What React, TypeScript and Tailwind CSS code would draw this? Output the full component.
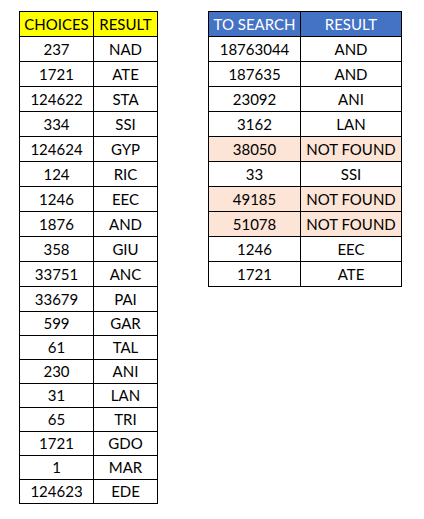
const choices: [string, string][] = [
  ['237', 'NAD'],
  ['1721', 'ATE'],
  ['124622', 'STA'],
  ['334', 'SSI'],
  ['124624', 'GYP'],
  ['124', 'RIC'],
  ['1246', 'EEC'],
  ['1876', 'AND'],
  ['358', 'GIU'],
  ['33751', 'ANC'],
  ['33679', 'PAI'],
  ['599', 'GAR'],
  ['61', 'TAL'],
  ['230', 'ANI'],
  ['31', 'LAN'],
  ['65', 'TRI'],
  ['1721', 'GDO'],
  ['1', 'MAR'],
  ['124623', 'EDE'],
];

const searches: [string, string][] = [
  ['18763044', 'AND'],
  ['187635', 'AND'],
  ['23092', 'ANI'],
  ['3162', 'LAN'],
  ['38050', 'NOT FOUND'],
  ['33', 'SSI'],
  ['49185', 'NOT FOUND'],
  ['51078', 'NOT FOUND'],
  ['1246', 'EEC'],
  ['1721', 'ATE'],
];

const cell = 'flex items-center justify-center border-r border-b border-black';

export default function App() {
  return (
    <div
      className="min-h-screen bg-white pl-[19px] pt-[11px] flex items-start gap-[50px] text-[15px] text-black"
      style={{ fontFamily: 'Lato, "Open Sans", sans-serif' }}
    >
      {/* Choices table */}
      <div className="grid grid-cols-[74px_64px] border-l border-t border-black">
        <div className={`${cell} h-[25px] bg-[#ffff00]`}>CHOICES</div>
        <div className={`${cell} h-[25px] bg-[#ffff00]`}>RESULT</div>
        {choices.map(([num, res], i) => (
          <div key={i} className="contents">
            <div className={`${cell} ${i < 11 ? 'h-[25px]' : 'h-[24px]'}`}>{num}</div>
            <div className={`${cell} ${i < 11 ? 'h-[25px]' : 'h-[24px]'}`}>{res}</div>
          </div>
        ))}
      </div>

      {/* Search table */}
      <div className="grid grid-cols-[92px_101px] border-l border-t border-black">
        <div className={`${cell} h-[25px] bg-[#4472c4] text-white`}>TO SEARCH</div>
        <div className={`${cell} h-[25px] bg-[#4472c4] text-white`}>RESULT</div>
        {searches.map(([num, res], i) => {
          const missing = res === 'NOT FOUND';
          return (
            <div key={i} className="contents">
              <div className={`${cell} h-[25px] ${missing ? 'bg-[#fce4d6]' : ''}`}>{num}</div>
              <div className={`${cell} h-[25px] ${missing ? 'bg-[#fce4d6]' : ''}`}>{res}</div>
            </div>
          );
        })}
      </div>
    </div>
  );
}
